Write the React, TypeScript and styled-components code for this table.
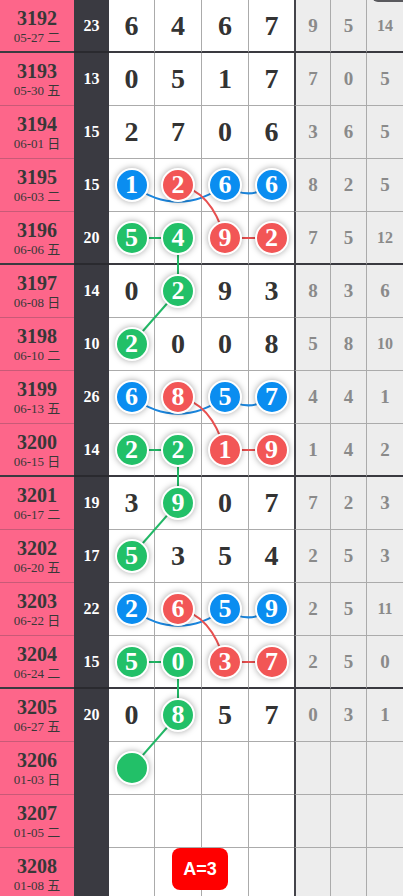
import React from 'react'
import styled, { createGlobalStyle } from 'styled-components'

const GlobalStyle = createGlobalStyle`
  html, body {
    margin: 0;
    padding: 0;
    background: #fff;
  }
  body {
    font-family: "Liberation Serif", "Noto Sans CJK SC", serif;
  }
`

const ROW_H = 53
const COLS = [74, 35, 45, 47, 47, 46, 36, 36, 37]
const NUM_X = [131.5, 178, 225, 271.5]

const PALETTE: Record<string, string> = {
  b: '#0a8df0',
  r: '#f25656',
  g: '#22c068',
}
const LINE: Record<string, string> = {
  b: '#1a86de',
  r: '#e85050',
  g: '#22b866',
}

type Cell = { n?: number; c?: string }
type Row = {
  id: number
  date: string
  day: string
  sum?: number
  nums: Cell[]
  tail: (number | null)[]
}

const n = (v: number): Cell => ({ n: v })
const ball = (v: number | undefined, c: string): Cell => ({ n: v, c })
const empty: Cell = {}

const rows: Row[] = [
  { id: 3192, date: '05-27', day: '二', sum: 23, nums: [n(6), n(4), n(6), n(7)], tail: [9, 5, 14] },
  { id: 3193, date: '05-30', day: '五', sum: 13, nums: [n(0), n(5), n(1), n(7)], tail: [7, 0, 5] },
  { id: 3194, date: '06-01', day: '日', sum: 15, nums: [n(2), n(7), n(0), n(6)], tail: [3, 6, 5] },
  { id: 3195, date: '06-03', day: '二', sum: 15, nums: [ball(1, 'b'), ball(2, 'r'), ball(6, 'b'), ball(6, 'b')], tail: [8, 2, 5] },
  { id: 3196, date: '06-06', day: '五', sum: 20, nums: [ball(5, 'g'), ball(4, 'g'), ball(9, 'r'), ball(2, 'r')], tail: [7, 5, 12] },
  { id: 3197, date: '06-08', day: '日', sum: 14, nums: [n(0), ball(2, 'g'), n(9), n(3)], tail: [8, 3, 6] },
  { id: 3198, date: '06-10', day: '二', sum: 10, nums: [ball(2, 'g'), n(0), n(0), n(8)], tail: [5, 8, 10] },
  { id: 3199, date: '06-13', day: '五', sum: 26, nums: [ball(6, 'b'), ball(8, 'r'), ball(5, 'b'), ball(7, 'b')], tail: [4, 4, 1] },
  { id: 3200, date: '06-15', day: '日', sum: 14, nums: [ball(2, 'g'), ball(2, 'g'), ball(1, 'r'), ball(9, 'r')], tail: [1, 4, 2] },
  { id: 3201, date: '06-17', day: '二', sum: 19, nums: [n(3), ball(9, 'g'), n(0), n(7)], tail: [7, 2, 3] },
  { id: 3202, date: '06-20', day: '五', sum: 17, nums: [ball(5, 'g'), n(3), n(5), n(4)], tail: [2, 5, 3] },
  { id: 3203, date: '06-22', day: '日', sum: 22, nums: [ball(2, 'b'), ball(6, 'r'), ball(5, 'b'), ball(9, 'b')], tail: [2, 5, 11] },
  { id: 3204, date: '06-24', day: '二', sum: 15, nums: [ball(5, 'g'), ball(0, 'g'), ball(3, 'r'), ball(7, 'r')], tail: [2, 5, 0] },
  { id: 3205, date: '06-27', day: '五', sum: 20, nums: [n(0), ball(8, 'g'), n(5), n(7)], tail: [0, 3, 1] },
  { id: 3206, date: '01-03', day: '日', nums: [ball(undefined, 'g'), empty, empty, empty], tail: [null, null, null] },
  { id: 3207, date: '01-05', day: '二', nums: [empty, empty, empty, empty], tail: [null, null, null] },
  { id: 3208, date: '01-08', day: '五', nums: [empty, empty, empty, empty], tail: [null, null, null] },
]

// links drawn between balls: colour, from [row, col], to [row, col], shape
type Link = { c: string; a: [number, number]; b: [number, number]; k: 'sag' | 'bend' | 'line' }

const groupLinks = (r: number): Link[] => [
  { c: 'b', a: [r, 0], b: [r, 2], k: 'sag' },
  { c: 'b', a: [r, 2], b: [r, 3], k: 'sag' },
  { c: 'r', a: [r, 1], b: [r + 1, 2], k: 'bend' },
  { c: 'r', a: [r + 1, 2], b: [r + 1, 3], k: 'line' },
  { c: 'g', a: [r + 1, 0], b: [r + 1, 1], k: 'line' },
  { c: 'g', a: [r + 1, 1], b: [r + 2, 1], k: 'line' },
  { c: 'g', a: [r + 2, 1], b: [r + 3, 0], k: 'line' },
]

const links: Link[] = [...groupLinks(3), ...groupLinks(7), ...groupLinks(11)]

const pt = ([r, c]: [number, number]) => [NUM_X[c], r * ROW_H + 26]

const linkPath = (l: Link) => {
  const [x0, y0] = pt(l.a)
  const [x1, y1] = pt(l.b)
  if (l.k === 'sag') {
    return `M${x0} ${y0} Q${(x0 + x1) / 2} ${y0 + 0.36 * (x1 - x0)} ${x1} ${y1}`
  }
  if (l.k === 'bend') {
    return `M${x0} ${y0} Q${x0 + 0.7 * (x1 - x0)} ${y0 + 0.1 * (y1 - y0)} ${x1} ${y1}`
  }
  return `M${x0} ${y0} L${x1} ${y1}`
}

const App: React.FC = () => {
  return (
    <>
      <GlobalStyle />
      <Chart>
        {rows.map((row, i) => {
          const thick = i % 4 === 0
          return (
            <RowLine key={row.id}>
              <Period $thick={thick}>
                <PeriodNo>{row.id}</PeriodNo>
                <PeriodDate>
                  {row.date} {row.day}
                </PeriodDate>
              </Period>
              <Sum $thick={thick}>{row.sum ?? ''}</Sum>
              {row.nums.map((cell, j) => (
                <Num key={j} $thick={thick} $first={j === 0}>
                  {cell.c ? <Ball $c={PALETTE[cell.c]}>{cell.n ?? ''}</Ball> : cell.n ?? ''}
                </Num>
              ))}
              {row.tail.map((v, j) => (
                <Tail key={j} $thick={thick} $first={j === 0} $small={v !== null && v > 9}>
                  {v ?? ''}
                </Tail>
              ))}
            </RowLine>
          )
        })}
        <Links width={403} height={rows.length * ROW_H}>
          {links.map((l, i) => (
            <path key={i} d={linkPath(l)} stroke={LINE[l.c]} strokeWidth={2} fill="none" />
          ))}
        </Links>
      </Chart>
      <TopTab />
      <CountButton>A=3</CountButton>
    </>
  )
}

const Chart = styled.div`
  position: relative;
  width: 403px;
`

const RowLine = styled.div`
  display: grid;
  grid-template-columns: ${COLS.map((w) => w + 'px').join(' ')};
  height: ${ROW_H}px;
`

const Period = styled.div<{ $thick: boolean }>`
  box-sizing: border-box;
  background: #fd668a;
  border-bottom: ${(p) => (p.$thick ? '2px solid #3a3a40' : '1px solid #c85a77')};
  color: #383838;
  display: flex;
  flex-direction: column;
  align-items: center;
  justify-content: center;
  padding-top: 2px;
`

const PeriodNo = styled.span`
  font-size: 20px;
  font-weight: bold;
  line-height: 21px;
`

const PeriodDate = styled.span`
  font-size: 13px;
  line-height: 17px;
`

const Sum = styled.div<{ $thick: boolean }>`
  box-sizing: border-box;
  background: #3a3a41;
  border-bottom: ${(p) => (p.$thick ? '2px solid #2a2a2f' : '1px solid #3a3a41')};
  color: #fff;
  font-size: 16px;
  font-weight: bold;
  display: flex;
  align-items: center;
  justify-content: center;
`

const Num = styled.div<{ $thick: boolean; $first: boolean }>`
  box-sizing: border-box;
  background: #fff;
  border-left: ${(p) => (p.$first ? 'none' : '1px solid #ababab')};
  border-bottom: ${(p) => (p.$thick ? '2px solid #3a3a40' : '1px solid #ababab')};
  color: #333;
  font-size: 28px;
  font-weight: bold;
  display: flex;
  align-items: center;
  justify-content: center;
`

const Tail = styled.div<{ $thick: boolean; $first: boolean; $small: boolean }>`
  box-sizing: border-box;
  background: #ededed;
  border-left: ${(p) => (p.$first ? '2px solid #44444a' : '1px solid #ababab')};
  border-bottom: ${(p) => (p.$thick ? '2px solid #3a3a40' : '1px solid #ababab')};
  color: #8a8a8a;
  font-size: ${(p) => (p.$small ? '16px' : '19px')};
  font-weight: bold;
  display: flex;
  align-items: center;
  justify-content: center;
`

const Ball = styled.span<{ $c: string }>`
  position: relative;
  z-index: 2;
  box-sizing: border-box;
  width: 34px;
  height: 34px;
  border-radius: 50%;
  border: 2px solid #fff;
  background: ${(p) => p.$c};
  box-shadow: 0 0 6px rgba(0, 0, 0, 0.35);
  color: #fff;
  font-size: 26px;
  font-weight: bold;
  display: flex;
  align-items: center;
  justify-content: center;
`

const Links = styled.svg`
  position: absolute;
  top: 0;
  left: 0;
  z-index: 1;
  pointer-events: none;
`

const TopTab = styled.div`
  position: fixed;
  top: -38px;
  right: 0;
  width: 31px;
  height: 40px;
  border-radius: 0 0 0 6px;
  background: #5a5a5e;
  z-index: 3;
`

const CountButton = styled.div`
  position: fixed;
  left: 172px;
  bottom: 6px;
  width: 56px;
  height: 42px;
  border-radius: 8px;
  background: #ff0000;
  color: #fff;
  font-family: "Liberation Sans", Arial, sans-serif;
  font-size: 18px;
  font-weight: bold;
  display: flex;
  align-items: center;
  justify-content: center;
  z-index: 4;
`

export default App
